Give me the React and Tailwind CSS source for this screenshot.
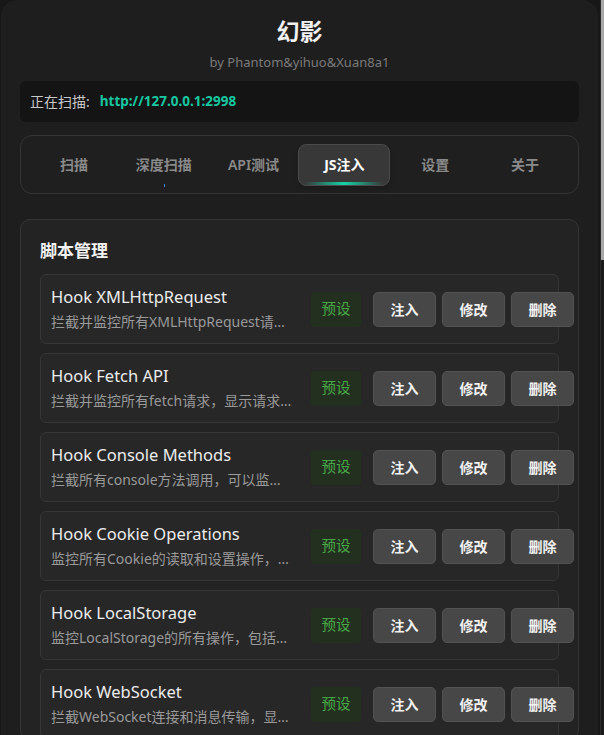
const scripts = [
  { name: 'Hook XMLHttpRequest', desc: '拦截并监控所有XMLHttpRequest请求，显示请求详情' },
  { name: 'Hook Fetch API', desc: '拦截并监控所有fetch请求，显示请求和响应内容' },
  { name: 'Hook Console Methods', desc: '拦截所有console方法调用，可以监控页面输出' },
  { name: 'Hook Cookie Operations', desc: '监控所有Cookie的读取和设置操作，记录变化' },
  { name: 'Hook LocalStorage', desc: '监控LocalStorage的所有操作，包括读写删除' },
  { name: 'Hook WebSocket', desc: '拦截WebSocket连接和消息传输，显示通信内容' },
]

const tabs = ['扫描', '深度扫描', 'API测试', 'JS注入', '设置', '关于']

function ScriptItem({ script }) {
  return (
    <div className="flex items-center h-[70px] pl-[10px] bg-[#272727] border border-[#363636] rounded-md">
      <div className="w-[243px] min-w-0 shrink-0">
        <div className="text-[16.5px] leading-[22px] text-[#ececec] truncate">{script.name}</div>
        <div className="text-[14px] leading-[20px] text-[#9a9a9a] truncate mt-[4px]">{script.desc}</div>
      </div>
      <div className="flex items-center ml-[17px] shrink-0">
        <span className="w-[50px] h-[35px] flex items-center justify-center rounded bg-[#24301f] text-[#48a848] text-[14.5px]">预设</span>
        <div className="flex gap-[6px] ml-[12px]">
          {['注入', '修改', '删除'].map(label => (
            <button key={label} className="w-[63px] h-[35px] rounded-[5px] bg-[#474747] border border-[#525252] text-[#f2f2f2] text-[14px] font-bold">
              {label}
            </button>
          ))}
        </div>
      </div>
    </div>
  )
}

function App() {
  return (
    <div className="relative h-[735px] overflow-hidden bg-[#171717] pl-px pr-[6px] font-['Segoe_UI','Noto_Sans','Noto_Sans_CJK_SC',sans-serif]">
      <div className="h-full bg-[#1e1e1e] rounded-t-2xl px-[19px] pt-[15px]">
        <h1 className="text-center text-[23px] leading-[32px] font-bold text-[#f0f0f0]">幻影</h1>
        <p className="text-center text-[13px] leading-[20px] text-[#7a7a7a] mt-[5px]">by Phantom&amp;yihuo&amp;Xuan8a1</p>

        <div className="mt-[9px] h-[41px] flex items-center px-[10px] bg-[#141414] rounded-md">
          <span className="text-[14px] text-[#c8c8c8]">正在扫描:</span>
          <span className="ml-[10px] text-[13.5px] text-[#16c7a0] font-bold">http://127.0.0.1:2998</span>
        </div>

        <div className="mt-[13px] h-[59px] flex items-center px-[8px] border border-[#353535] rounded-xl bg-[#1f1f1f]">
          {tabs.map(tab => {
            const active = tab === 'JS注入'
            return (
              <div key={tab} className="flex-1 flex justify-center">
                {active ? (
                  <div className="relative w-[92px] h-[42px] flex items-center justify-center bg-[#383838] border border-[#4a4a4a] rounded-lg shadow-md overflow-hidden">
                    <span className="text-[14px] font-bold text-white">{tab}</span>
                    <span className="absolute bottom-0 left-[6px] right-[6px] h-[3px] rounded-full bg-gradient-to-r from-transparent via-[#14d3a6] to-transparent" />
                  </div>
                ) : (
                  <div className="relative h-[42px] flex items-center">
                    <span className="text-[14px] font-semibold text-[#8a8a8a]">{tab}</span>
                    {tab === '深度扫描' && (
                      <span className="absolute bottom-[-1px] left-1/2 w-px h-[3px] bg-[#3b82f6]" />
                    )}
                  </div>
                )}
              </div>
            )
          })}
        </div>

        <div className="mt-[25px] bg-[#232323] border border-[#353535] rounded-[10px] px-[19px] pt-[19px]">
          <h2 className="text-[17px] leading-[24px] font-bold text-[#f2f2f2]">脚本管理</h2>
          <div className="mt-[11px] flex flex-col gap-[9px]">
            {scripts.map(s => <ScriptItem key={s.name} script={s} />)}
          </div>
        </div>
      </div>

      {/* scrollbar */}
      <div className="absolute top-0 right-0 w-[4px] h-full bg-[#1b1b1b] border-l border-[#2a2a2a]">
        <div className="h-[260px] bg-[#a8a8a8]" />
      </div>
    </div>
  )
}

export default App
